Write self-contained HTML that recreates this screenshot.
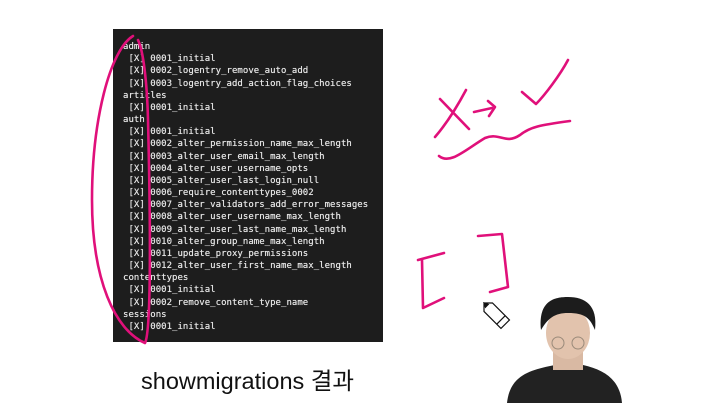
<!DOCTYPE html>
<html><head><meta charset="utf-8"><style>
html,body{margin:0;padding:0;width:708px;height:403px;background:#fff;overflow:hidden;position:relative}
.term{position:absolute;left:113px;top:29px;width:270px;height:313px;background:#1d1d1d}
pre{position:absolute;left:123px;top:41px;margin:0;font-family:"DejaVu Sans Mono","Liberation Mono",monospace;font-size:9px;line-height:12.17px;color:#e4e4e4;letter-spacing:0.03px;text-shadow:0 0 0.4px #fff}
.cap{position:absolute;left:141px;top:366px;font-family:"Liberation Sans","Noto Sans CJK KR",sans-serif;font-size:23.5px;color:#111;line-height:30px}
svg{position:absolute;left:0;top:0}
</style></head><body>
<div class="term"></div>
<pre>admin
 [X] 0001_initial
 [X] 0002_logentry_remove_auto_add
 [X] 0003_logentry_add_action_flag_choices
articles
 [X] 0001_initial
auth
 [X] 0001_initial
 [X] 0002_alter_permission_name_max_length
 [X] 0003_alter_user_email_max_length
 [X] 0004_alter_user_username_opts
 [X] 0005_alter_user_last_login_null
 [X] 0006_require_contenttypes_0002
 [X] 0007_alter_validators_add_error_messages
 [X] 0008_alter_user_username_max_length
 [X] 0009_alter_user_last_name_max_length
 [X] 0010_alter_group_name_max_length
 [X] 0011_update_proxy_permissions
 [X] 0012_alter_user_first_name_max_length
contenttypes
 [X] 0001_initial
 [X] 0002_remove_content_type_name
sessions
 [X] 0001_initial</pre>
<div class="cap">showmigrations 결과</div>
<svg width="708" height="403" viewBox="0 0 708 403">
<g fill="none" stroke="#e0107a" stroke-width="2.6" stroke-linecap="round" stroke-linejoin="round">
<path d="M133 36 C110 50 92 120 92 200 C92 280 115 330 145 343 C152 330 150 200 148 120 C147 80 143 50 138 40"/>
<path d="M440 99 L469 129"/>
<path d="M466 90 C458 105 448 122 435 137"/>
<path d="M474 112 L492 108"/>
<path d="M488 101 L495 107 L489 116"/>
<path d="M522 92 L536 104 C545 95 560 75 568 60"/>
<path d="M439 156 C450 165 465 150 485 138 C500 132 505 145 520 135 C530 127 540 125 570 121"/>
<path d="M418 260 L444 253"/>
<path d="M422 260 L423 308 L444 298"/>
<path d="M478 236 L502 234 L508 287 L490 292"/>
</g>
<g transform="translate(484,303) rotate(45)" stroke="#111" stroke-width="1.2" fill="#fff">
<path d="M0 0 L6 -6 L30 -6 L30 6 L6 6 Z"/>
<path d="M24 -6 L24 6"/>
<path d="M0 0 L4 -2 L4 2 Z" fill="#111"/>
</g>
<g>
<path d="M507 403 C510 375 530 370 555 365 L583 365 C605 370 620 380 622 403 Z" fill="#222"/>
<rect x="553" y="345" width="30" height="25" fill="#d9b9a3"/>
<ellipse cx="568" cy="333" rx="22" ry="26" fill="#e2c3ad"/>
<path d="M541 330 C538 300 555 297 568 297 C585 297 598 305 595 330 C590 318 585 313 568 313 C555 313 548 318 541 330 Z" fill="#1c1c1c"/>
<g fill="none" stroke="#9a8a7a" stroke-width="1"><circle cx="558" cy="343" r="6"/><circle cx="578" cy="343" r="6"/></g>
</g>
</svg>
</body></html>
